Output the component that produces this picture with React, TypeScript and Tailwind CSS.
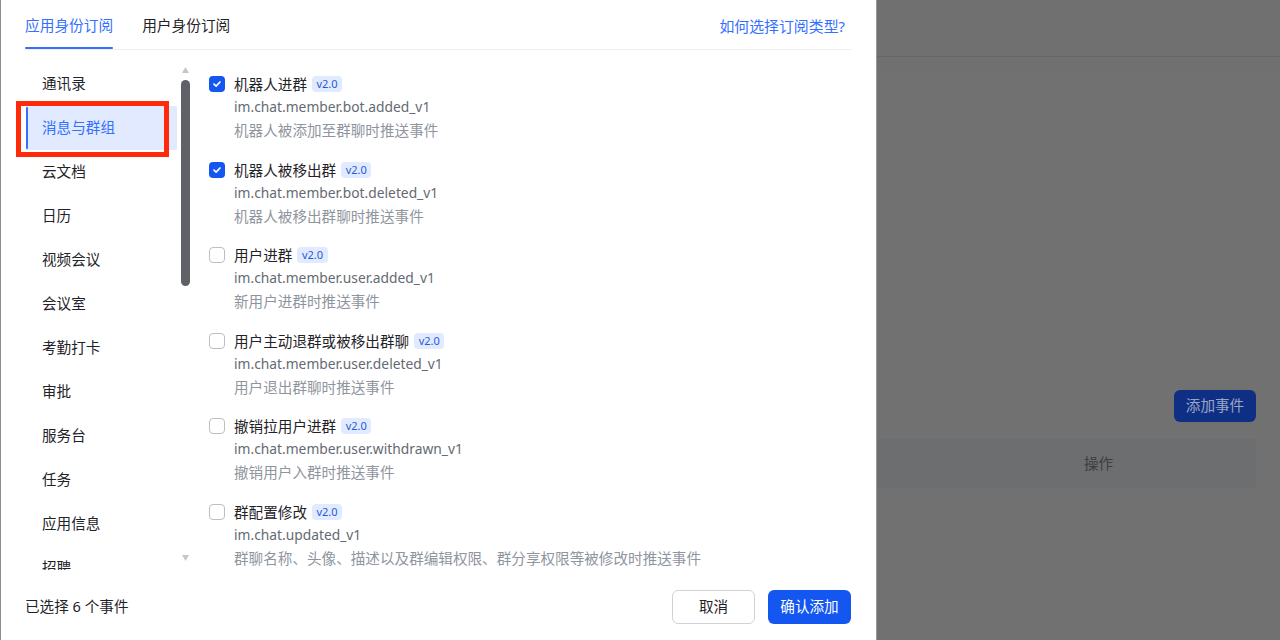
import React from "react";

const font = { fontFamily: '"Noto Sans", "Noto Sans CJK SC", sans-serif' };

const categories = [
  "通讯录",
  "消息与群组",
  "云文档",
  "日历",
  "视频会议",
  "会议室",
  "考勤打卡",
  "审批",
  "服务台",
  "任务",
  "应用信息",
  "招聘",
];

const events = [
  { title: "机器人进群", code: "im.chat.member.bot.added_v1", desc: "机器人被添加至群聊时推送事件", checked: true },
  { title: "机器人被移出群", code: "im.chat.member.bot.deleted_v1", desc: "机器人被移出群聊时推送事件", checked: true },
  { title: "用户进群", code: "im.chat.member.user.added_v1", desc: "新用户进群时推送事件", checked: false },
  { title: "用户主动退群或被移出群聊", code: "im.chat.member.user.deleted_v1", desc: "用户退出群聊时推送事件", checked: false },
  { title: "撤销拉用户进群", code: "im.chat.member.user.withdrawn_v1", desc: "撤销用户入群时推送事件", checked: false },
  { title: "群配置修改", code: "im.chat.updated_v1", desc: "群聊名称、头像、描述以及群编辑权限、群分享权限等被修改时推送事件", checked: false },
];

function Checkbox({ checked }: { checked: boolean }) {
  if (checked) {
    return (
      <span className="flex h-[16px] w-[16px] shrink-0 items-center justify-center rounded-[4px] bg-[#1456f0]">
        <svg width="10" height="10" viewBox="0 0 10 10" fill="none">
          <path d="M2 5.2 L4.1 7.2 L8 3" stroke="white" strokeWidth="1.7" strokeLinecap="round" strokeLinejoin="round" />
        </svg>
      </span>
    );
  }
  return <span className="h-[16px] w-[16px] shrink-0 rounded-[4px] border border-[#bbbfc4] bg-white" />;
}

export default function App() {
  return (
    <div className="flex h-[640px] w-[1280px] overflow-hidden bg-[#707070]" style={font}>
      {/* dialog */}
      <div className="relative flex h-full w-[877px] shrink-0 flex-col border-l border-r border-l-[#8e8e8e] border-r-[#9a9a9a] bg-white pl-[24px] pr-[24px]">
        {/* tabs */}
        <div className="flex h-[50px] shrink-0 items-end justify-between border-b border-[#eff0f1]">
          <div className="flex gap-[29px]">
            <div className="flex flex-col items-stretch">
              <span className="text-[14.7px] leading-[24px] text-[#3370ff]">应用身份订阅</span>
              <span className="mt-[10px] h-[2px] rounded-full bg-[#3370ff]" />
            </div>
            <div className="flex flex-col">
              <span className="text-[14.7px] leading-[24px] text-[#1f2329]">用户身份订阅</span>
              <span className="mt-[10px] h-[2px]" />
            </div>
          </div>
          <span className="mb-[11px] pr-[7px] text-[14.9px] leading-[24px] text-[#3370ff]">如何选择订阅类型?</span>
        </div>

        {/* body */}
        <div className="flex h-[520px] overflow-hidden pt-[12px]">
          {/* category list */}
          <div className="flex w-[152px] shrink-0 flex-col pl-px">
            {categories.map((c, i) => (
              <div
                key={c}
                className={
                  i === 1
                    ? "relative flex h-[44px] shrink-0 items-center bg-[#e1eaff] pl-[16px] text-[14.6px] text-[#3370ff]"
                    : "flex h-[44px] shrink-0 items-center pl-[16px] text-[14.6px] text-[#1f2329]"
                }
              >
                {i === 1 && <span className="absolute top-[1px] bottom-[1px] left-0 w-[2px] rounded-full bg-[#3370ff]" />}
                {c}
              </div>
            ))}
          </div>

          {/* scrollbar */}
          <div className="flex w-[16px] shrink-0 flex-col items-center">
            <svg width="7" height="6" viewBox="0 0 7 6" className="mt-[5px]">
              <path d="M3.5 0 L7 6 L0 6 Z" fill="#c4c6c9" />
            </svg>
            <div className="mt-[7px] h-[206px] w-[9px] rounded-full bg-[#5f6166]" />
            <div className="flex-1" />
            <svg width="7" height="6" viewBox="0 0 7 6" className="mb-[9px]">
              <path d="M0 0 L7 0 L3.5 6 Z" fill="#c4c6c9" />
            </svg>
          </div>

          {/* event list */}
          <div className="flex flex-1 flex-col gap-[17.5px] pt-[11px] pl-[16px]">
            {events.map((e) => (
              <div key={e.code} className="flex gap-[9px]">
                <div className="flex h-[22px] items-center">
                  <Checkbox checked={e.checked} />
                </div>
                <div className="flex flex-col gap-px">
                  <div className="flex h-[22px] items-center gap-[5px]">
                    <span className="text-[14.6px] leading-[22px] text-[#1f2329]">{e.title}</span>
                    <span className="flex h-[16px] items-center rounded-[4px] bg-[#e1eaff] px-[4.5px] text-[11px] leading-[16px] text-[#245bdb]">
                      v2.0
                    </span>
                  </div>
                  <span className="text-[13.8px] leading-[22px] text-[#646a73]">{e.code}</span>
                  <span className="text-[14.6px] leading-[22px] text-[#8f959e]">{e.desc}</span>
                </div>
              </div>
            ))}
          </div>
        </div>

        {/* footer */}
        <div className="flex flex-1 items-start justify-between pt-[20px]">
          <span className="mt-[4px] text-[14.6px] leading-[24px] text-[#1f2329]">已选择 6 个事件</span>
          <div className="flex gap-[13px] pr-px">
            <button className="flex h-[34px] w-[83px] items-center justify-center rounded-[6px] border border-[#d0d3d6] bg-white text-[14.6px] text-[#1f2329]">
              取消
            </button>
            <button className="flex h-[34px] w-[83px] items-center justify-center rounded-[6px] bg-[#1456f0] text-[14.6px] text-white">
              确认添加
            </button>
          </div>
        </div>

        {/* highlight frame */}
        <div className="pointer-events-none absolute top-[101px] left-[15px] h-[56px] w-[153px] border-[5px] border-[#ff2a0a]" />
      </div>

      {/* dimmed page behind */}
      <div className="flex flex-1 flex-col">
        <div className="h-[57px] shrink-0 border-b border-[#666666]" />
        <div className="mt-[14px] flex flex-1 flex-col rounded-tl-[4px] bg-[#717171] pr-[24px]">
          <div className="h-[319px] shrink-0" />
          <div className="flex justify-end">
            <div className="flex h-[32px] w-[82px] items-center justify-center rounded-[6px] bg-[#0f2f85] text-[14.6px] text-[#9ca6c4]">
              添加事件
            </div>
          </div>
          <div className="mt-[17px] flex h-[49px] items-center bg-[#6d6e70]">
            <span className="ml-[207px] text-[14.6px] text-[#3d3d3d]">操作</span>
          </div>
        </div>
      </div>
    </div>
  );
}
